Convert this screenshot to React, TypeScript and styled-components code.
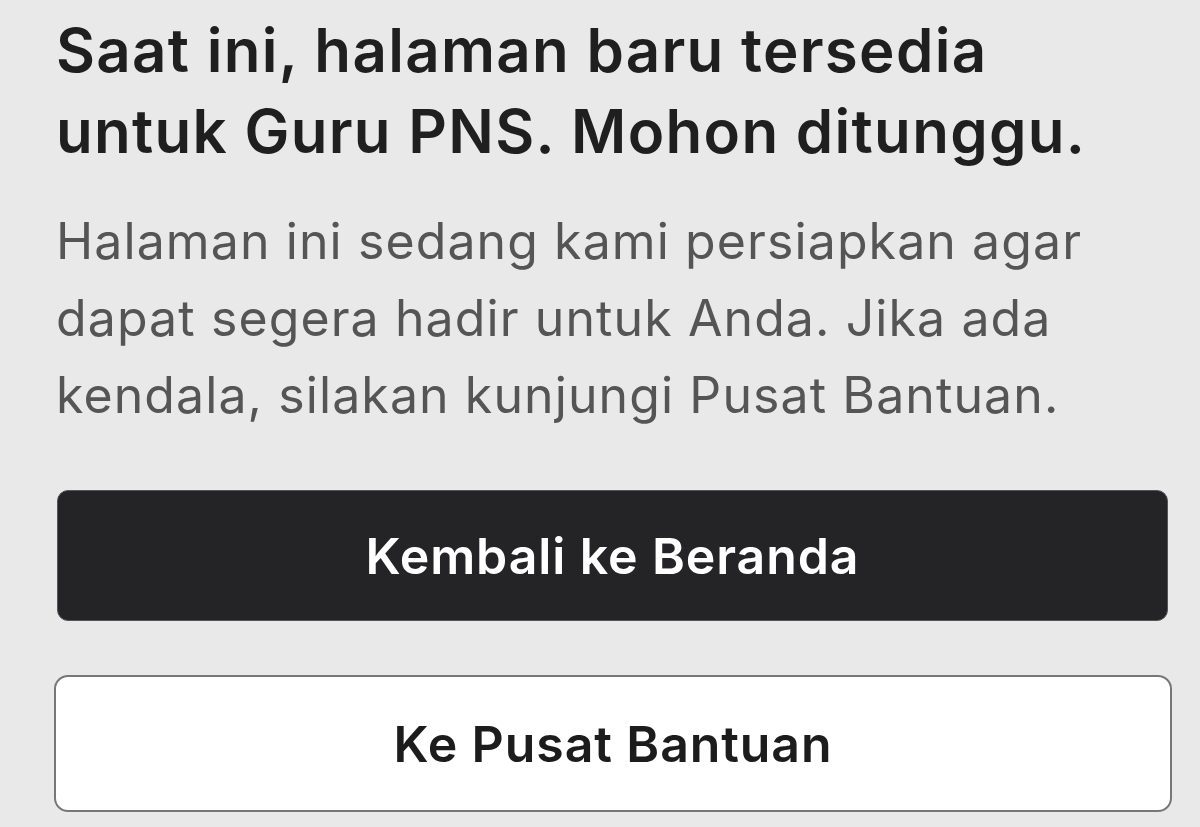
import React from "react";
import styled, { createGlobalStyle } from "styled-components";

const Global = createGlobalStyle`
  html, body { margin: 0; padding: 0; background: #e9e9e9; }
  body { font-family: Inter, "Noto Sans", sans-serif; -webkit-font-smoothing: antialiased; }
`;

const Page = styled.main`
  width: 1200px;
  height: 827px;
  box-sizing: border-box;
  padding: 10px 28px 0 56px;
  display: flex;
  flex-direction: column;
  overflow: hidden;
`;

const Title = styled.h1`
  margin: 0;
  font-size: 60px;
  line-height: 81px;
  font-weight: 600;
  color: #1f1f1f;
  letter-spacing: 1.3px;
  white-space: nowrap;
`;

const Body = styled.p`
  margin: 31px 0 0;
  font-size: 50px;
  line-height: 77px;
  font-weight: 400;
  color: #555555;
  letter-spacing: 1.1px;
  white-space: nowrap;
`;

const Actions = styled.div`
  display: flex;
  flex-direction: column;
  gap: 54px;
  margin-top: 56px;
`;

const Button = styled.button<{ $variant: "primary" | "outline" }>`
  display: flex;
  align-items: center;
  justify-content: center;
  font-family: inherit;
  font-size: 50px;
  font-weight: 600;
  letter-spacing: 0.9px;
  box-sizing: border-box;
  cursor: pointer;
  ${({ $variant }) =>
    $variant === "primary"
      ? `
    margin: 0 4px 0 1px;
    height: 131px;
    background: #242426;
    color: #ffffff;
    border: 1px solid #555;
    border-radius: 11px;
  `
      : `
    margin: 0 0 0 -2px;
    height: 137px;
    background: #ffffff;
    color: #1c1c1c;
    border: 2px solid #777777;
    border-radius: 14px;
  `}
`;

export default function App() {
  return (
    <>
      <Global />
      <Page>
        <Title>
          Saat ini, halaman baru tersedia
          <br />
          untuk Guru PNS. Mohon ditunggu.
        </Title>
        <Body>
          Halaman ini sedang kami persiapkan agar
          <br />
          dapat segera hadir untuk Anda. Jika ada
          <br />
          kendala, silakan kunjungi Pusat Bantuan.
        </Body>
        <Actions>
          <Button $variant="primary">Kembali ke Beranda</Button>
          <Button $variant="outline">Ke Pusat Bantuan</Button>
        </Actions>
      </Page>
    </>
  );
}
